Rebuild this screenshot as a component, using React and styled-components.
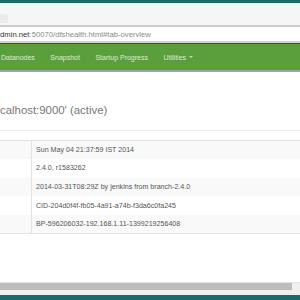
import React from 'react';
import styled, { createGlobalStyle } from 'styled-components';

const GlobalStyle = createGlobalStyle`
  html, body {
    margin: 0;
    padding: 0;
    overflow: hidden;
    background: #fff;
  }
  body {
    font-family: "Liberation Sans", Arial, sans-serif;
  }
`;

const Screen = styled.div`
  width: 300px;
  height: 300px;
  display: flex;
  flex-direction: column;
  overflow: hidden;
`;

const TealBar = styled.div`
  height: ${(p) => p.$h}px;
  background: #1b6b69;
  flex-shrink: 0;
`;

const TabStrip = styled.div`
  height: 22px;
  background: #f6f6f6;
  display: flex;
  align-items: flex-end;
  flex-shrink: 0;
`;

const Tab = styled.div`
  width: 8px;
  height: 9px;
  margin-bottom: 2px;
  background: #ebebeb;
  border-top-right-radius: 3px;
`;

const AddressBar = styled.div`
  height: 14px;
  border-top: 2px solid #cdcdcd;
  border-bottom: 2px solid #d2d2d2;
  box-shadow: 0 1px 0 #4a4a4a;
  background: #fff;
  display: flex;
  align-items: center;
  font-size: 7.7px;
  white-space: nowrap;
  color: #8a8a8a;
  flex-shrink: 0;
  margin-bottom: 1px;
`;

const Host = styled.span`
  color: #333;
`;

const Navbar = styled.nav`
  height: 26px;
  background: #5b9f3c;
  border-bottom: 2px solid #a3a3a3;
  display: flex;
  align-items: center;
  padding-left: 1px;
  gap: 15.5px;
  flex-shrink: 0;
`;

const NavItem = styled.span`
  font-size: 7px;
  color: #dcebd3;
  white-space: nowrap;
  display: flex;
  align-items: center;
`;

const Caret = styled.span`
  display: inline-block;
  margin-left: 3px;
  border-left: 2px solid transparent;
  border-right: 2px solid transparent;
  border-top: 2px solid #c5ddb8;
`;

const Content = styled.main`
  flex: 1;
  background: #fff;
`;

const PageHeader = styled.h1`
  margin: 32px 0 9px;
  padding-bottom: 13px;
  border-bottom: 1px solid #eee;
  font-weight: normal;
  font-size: 11.4px;
  line-height: 13px;
  color: #777;
  white-space: nowrap;
`;

const Table = styled.table`
  width: 100%;
  border-collapse: collapse;
  border-top: 1px solid #e2e2e2;
  border-bottom: 1px solid #e2e2e2;
  font-size: 7.1px;
  color: #555;
`;

const Row = styled.tr`
  height: 18.6px;
  background: ${(p) => (p.$striped ? '#f9f9f9' : '#fff')};
  & + & td {
    border-top: 1px solid #e2e2e2;
  }
`;

const Label = styled.td`
  width: 31px;
  padding: 0;
  border-right: 1px solid #e2e2e2;
`;

const Value = styled.td`
  padding: 0 0 0 4px;
  white-space: nowrap;
`;

const Scrollbar = styled.div`
  height: 12px;
  flex-shrink: 0;
  background: #f0f0f0;
  border-top: 1px solid #e4e4e4;
  padding-right: 8px;
`;

const Thumb = styled.div`
  height: 7px;
  background: #bdbdbd;
`;

const rows = [
  'Sun May 04 21:37:59 IST 2014',
  '2.4.0, r1583262',
  '2014-03-31T08:29Z by jenkins from branch-2.4.0',
  'CID-204d0f4f-fb05-4a91-a74b-f3da6c0fa245',
  'BP-596206032-192.168.1.11-1399219256408',
];

export default function App() {
  return (
    <Screen>
      <GlobalStyle />
      <TealBar $h={3} />
      <TabStrip>
        <Tab />
      </TabStrip>
      <AddressBar>
        <Host>dmin.net</Host>:50070/dfshealth.html#tab-overview
      </AddressBar>
      <Navbar>
        <NavItem>Datanodes</NavItem>
        <NavItem>Snapshot</NavItem>
        <NavItem>Startup Progress</NavItem>
        <NavItem>
          Utilities <Caret />
        </NavItem>
      </Navbar>
      <Content>
        <PageHeader>calhost:9000' (active)</PageHeader>
        <Table>
          <tbody>
            {rows.map((v, i) => (
              <Row key={i} $striped={i % 2 === 0}>
                <Label />
                <Value>{v}</Value>
              </Row>
            ))}
          </tbody>
        </Table>
      </Content>
      <Scrollbar>
        <Thumb />
      </Scrollbar>
      <TealBar $h={5} />
    </Screen>
  );
}
